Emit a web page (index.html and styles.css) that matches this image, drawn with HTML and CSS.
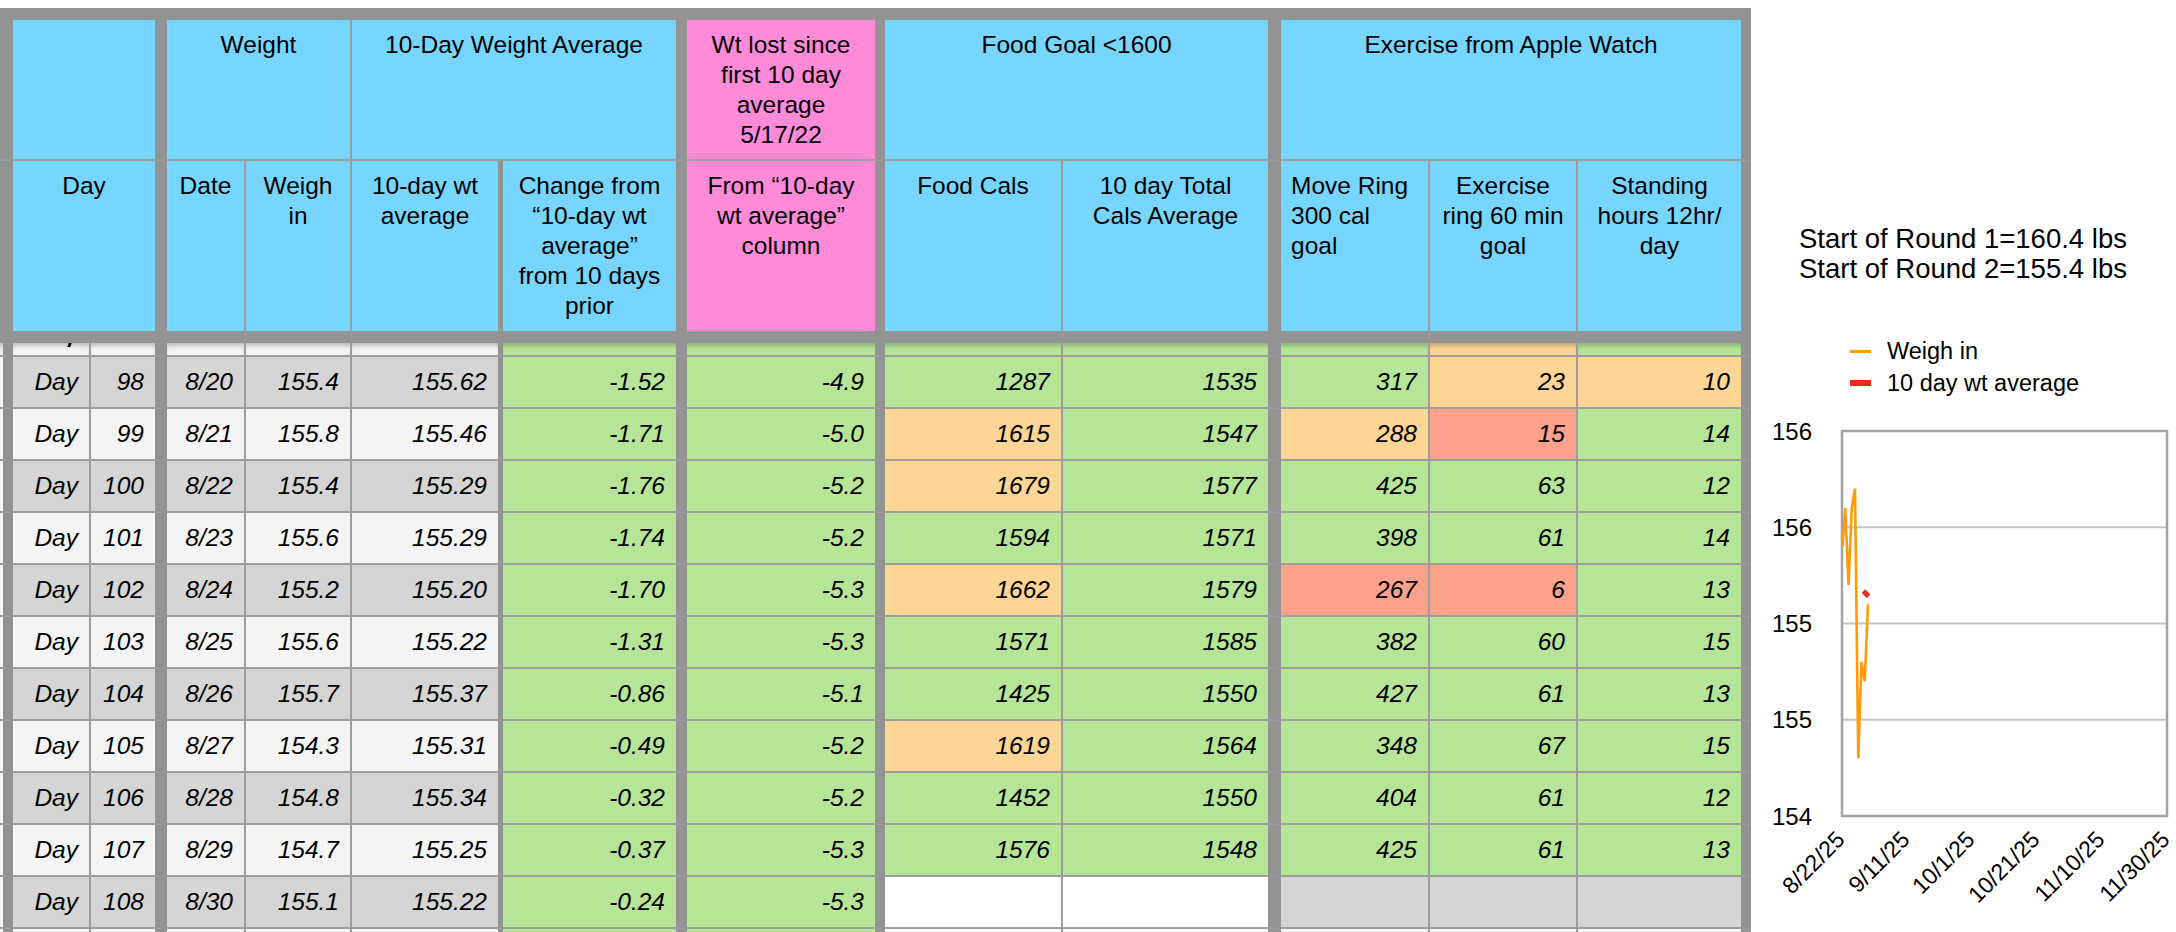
FILE: index.html
```html
<!DOCTYPE html>
<html lang="en">
<head>
<meta charset="utf-8">
<title>Weight tracker</title>
<link rel="stylesheet" href="styles.css">
</head>
<body>
<div class="page">
  <div class="sheet">
    <div class="hrow h1">
      <div class="c sl"></div>
      <div class="c hd sp2 tk12"></div>
      <div class="c hd sp2 tn">Weight</div>
      <div class="c hd sp2 tk11">10-Day Weight Average</div>
      <div class="c hd pink tk10">Wt lost since<br>first 10 day<br>average<br>5/17/22</div>
      <div class="c hd sp2 tk13">Food Goal &lt;1600</div>
      <div class="c hd sp3 tk10">Exercise from Apple Watch</div>
    </div>
    <div class="hrow h2">
      <div class="c sl"></div>
      <div class="c hd sp2 tk12">Day</div>
      <div class="c hd tn">Date</div>
      <div class="c hd tn">Weigh<br>in</div>
      <div class="c hd tk5">10-day wt<br>average</div>
      <div class="c hd tk11">Change from<br>“10-day wt<br>average”<br>from 10 days<br>prior</div>
      <div class="c hd pink tk10">From “10-day<br>wt average”<br>column</div>
      <div class="c hd tn">Food Cals</div>
      <div class="c hd tk13">10 day Total<br>Cals Average</div>
      <div class="c hd tn left">Move Ring<br>300 cal<br>goal</div>
      <div class="c hd tn">Exercise<br>ring 60 min<br>goal</div>
      <div class="c hd tk10">Standing<br>hours 12hr/<br>day</div>
    </div>

    <div class="row part">
      <div class="c l"></div><div class="c l"><i class="desc"></i></div><div class="c l"></div><div class="c l"></div><div class="c l"></div><div class="c l"></div><div class="c g"></div><div class="c g"></div><div class="c g"></div><div class="c g"></div><div class="c g"></div><div class="c o"></div><div class="c g"></div>
    </div>
    <div class="row">
      <div class="c l"></div><div class="c s">Day</div><div class="c s">98</div><div class="c s">8/20</div><div class="c s">155.4</div><div class="c s">155.62</div><div class="c g">-1.52</div><div class="c g">-4.9</div><div class="c g">1287</div><div class="c g">1535</div><div class="c g">317</div><div class="c o">23</div><div class="c o">10</div>
    </div>
    <div class="row">
      <div class="c l"></div><div class="c l">Day</div><div class="c l">99</div><div class="c l">8/21</div><div class="c l">155.8</div><div class="c l">155.46</div><div class="c g">-1.71</div><div class="c g">-5.0</div><div class="c o">1615</div><div class="c g">1547</div><div class="c o">288</div><div class="c r">15</div><div class="c g">14</div>
    </div>
    <div class="row">
      <div class="c l"></div><div class="c s">Day</div><div class="c s">100</div><div class="c s">8/22</div><div class="c s">155.4</div><div class="c s">155.29</div><div class="c g">-1.76</div><div class="c g">-5.2</div><div class="c o">1679</div><div class="c g">1577</div><div class="c g">425</div><div class="c g">63</div><div class="c g">12</div>
    </div>
    <div class="row">
      <div class="c l"></div><div class="c l">Day</div><div class="c l">101</div><div class="c l">8/23</div><div class="c l">155.6</div><div class="c l">155.29</div><div class="c g">-1.74</div><div class="c g">-5.2</div><div class="c g">1594</div><div class="c g">1571</div><div class="c g">398</div><div class="c g">61</div><div class="c g">14</div>
    </div>
    <div class="row">
      <div class="c l"></div><div class="c s">Day</div><div class="c s">102</div><div class="c s">8/24</div><div class="c s">155.2</div><div class="c s">155.20</div><div class="c g">-1.70</div><div class="c g">-5.3</div><div class="c o">1662</div><div class="c g">1579</div><div class="c r">267</div><div class="c r">6</div><div class="c g">13</div>
    </div>
    <div class="row">
      <div class="c l"></div><div class="c l">Day</div><div class="c l">103</div><div class="c l">8/25</div><div class="c l">155.6</div><div class="c l">155.22</div><div class="c g">-1.31</div><div class="c g">-5.3</div><div class="c g">1571</div><div class="c g">1585</div><div class="c g">382</div><div class="c g">60</div><div class="c g">15</div>
    </div>
    <div class="row">
      <div class="c l"></div><div class="c s">Day</div><div class="c s">104</div><div class="c s">8/26</div><div class="c s">155.7</div><div class="c s">155.37</div><div class="c g">-0.86</div><div class="c g">-5.1</div><div class="c g">1425</div><div class="c g">1550</div><div class="c g">427</div><div class="c g">61</div><div class="c g">13</div>
    </div>
    <div class="row">
      <div class="c l"></div><div class="c l">Day</div><div class="c l">105</div><div class="c l">8/27</div><div class="c l">154.3</div><div class="c l">155.31</div><div class="c g">-0.49</div><div class="c g">-5.2</div><div class="c o">1619</div><div class="c g">1564</div><div class="c g">348</div><div class="c g">67</div><div class="c g">15</div>
    </div>
    <div class="row">
      <div class="c l"></div><div class="c s">Day</div><div class="c s">106</div><div class="c s">8/28</div><div class="c s">154.8</div><div class="c s">155.34</div><div class="c g">-0.32</div><div class="c g">-5.2</div><div class="c g">1452</div><div class="c g">1550</div><div class="c g">404</div><div class="c g">61</div><div class="c g">12</div>
    </div>
    <div class="row">
      <div class="c l"></div><div class="c l">Day</div><div class="c l">107</div><div class="c l">8/29</div><div class="c l">154.7</div><div class="c l">155.25</div><div class="c g">-0.37</div><div class="c g">-5.3</div><div class="c g">1576</div><div class="c g">1548</div><div class="c g">425</div><div class="c g">61</div><div class="c g">13</div>
    </div>
    <div class="row">
      <div class="c l"></div><div class="c s">Day</div><div class="c s">108</div><div class="c s">8/30</div><div class="c s">155.1</div><div class="c s">155.22</div><div class="c g">-0.24</div><div class="c g">-5.3</div><div class="c w"></div><div class="c w"></div><div class="c s"></div><div class="c s"></div><div class="c s"></div>
    </div>
    <div class="row tail">
      <div class="c l"></div><div class="c l"></div><div class="c l"></div><div class="c l"></div><div class="c l"></div><div class="c l"></div><div class="c g"></div><div class="c g"></div><div class="c w"></div><div class="c w"></div><div class="c l"></div><div class="c l"></div><div class="c l"></div>
    </div>
  </div>

  <aside class="side">
    <div class="note">Start of Round 1=160.4 lbs<br>Start of Round 2=155.4 lbs</div>
    <ul class="legend">
      <li><span class="mk mk-wi"></span>Weigh in</li>
      <li><span class="mk mk-avg"></span>10 day wt average</li>
    </ul>
    <svg class="chart" width="425" height="533" viewBox="0 0 425 533">
      <g class="grid">
        <line x1="92" x2="416" y1="128.25" y2="128.25"/>
        <line x1="92" x2="416" y1="224.5" y2="224.5"/>
        <line x1="92" x2="416" y1="320.75" y2="320.75"/>
      </g>
      <rect class="frame" x="91" y="32" width="325" height="385"/>
      <g class="ylab">
        <text x="61" y="40.5">156</text>
        <text x="61" y="136.75">156</text>
        <text x="61" y="233">155</text>
        <text x="61" y="329.25">155</text>
        <text x="61" y="425.5">154</text>
      </g>
      <g class="xlab">
        <text transform="translate(95,442) rotate(-45)">8/22/25</text>
        <text transform="translate(160,442) rotate(-45)">9/11/25</text>
        <text transform="translate(225,442) rotate(-45)">10/1/25</text>
        <text transform="translate(290,442) rotate(-45)">10/21/25</text>
        <text transform="translate(355,442) rotate(-45)">11/10/25</text>
        <text transform="translate(420,442) rotate(-45)">11/30/25</text>
      </g>
      <polyline class="wi" points="91.5,147.5 94.25,109 97.5,186 100.75,109 104,89.75 107.25,359.25 110.5,263 113.75,282.25 117,205.25"/>
      <line class="avg" x1="112.5" y1="192" x2="117.5" y2="197.5"/>
    </svg>
  </aside>
</div>
</body>
</html>
```
FILE: styles.css
```css
html, body {
  margin: 0;
  padding: 0;
  background: #ffffff;
  overflow: hidden;
}
body {
  width: 2176px;
  height: 932px;
  font-family: "Liberation Sans", Arial, sans-serif;
  color: #000;
}
.page {
  display: flex;
  align-items: flex-start;
  height: 932px;
  overflow: hidden;
}

/* ---------- sheet ---------- */
.sheet {
  margin-top: 8px;
  width: 1751px;
  flex: none;
  display: grid;
  grid-template-columns: 13px 78px 76px 79px 106px 151px 184px 198px 178px 218px 149px 148px 173px;
  border-top: 12px solid #939393;
}
.hrow, .row { display: contents; }

.c {
  box-sizing: border-box;
  border-bottom: 2px solid #9d9d9d;
  border-right: 2px solid #9d9d9d;
  overflow: hidden;
}

/* header */
.hd {
  background: #76d6ff;
  font-size: 24.5px;
  line-height: 30px;
  text-align: center;
  padding: 10px 8px 0;
}
.hd.pink { background: #ff8ad8; }
.hd.left { text-align: left; padding-left: 10px; }
.sl { background: #939393; border-right: 10px solid #939393; }
.h1 > .c { height: 141px; }
.h2 > .c { height: 182px; border-bottom: 12px solid #939393; }
.sp2 { grid-column: span 2; }
.sp3 { grid-column: span 3; }
.tn { border-right: 2px solid #9d9d9d; }
.tk5 { border-right: 5px solid #939393; }
.tk10 { border-right: 10px solid #939393; }
.tk11 { border-right: 11px solid #939393; }
.tk12 { border-right: 12px solid #939393; }
.tk13 { border-right: 13px solid #939393; }

/* data rows */
.row > .c {
  height: 52px;
  font-size: 24.5px;
  font-style: italic;
  line-height: 50px;
  text-align: right;
  padding-right: 11px;
}
.row > .c:nth-child(1) { border-right: 10px solid #939393; padding: 0; }
.row > .c:nth-child(3) { border-right: 12px solid #939393; }
.row > .c:nth-child(6) { border-right: 5px solid #939393; }
.row > .c:nth-child(7) { border-right: 11px solid #939393; }
.row > .c:nth-child(8) { border-right: 10px solid #939393; }
.row > .c:nth-child(10) { border-right: 13px solid #939393; }
.row > .c:nth-child(13) { border-right: 10px solid #939393; }

.row.part > .c {
  height: 14px;
  box-shadow: inset 0 5px 4px -2px rgba(0, 0, 0, 0.22);
  position: relative;
}
/* tail of a "y" descender from the row scrolled under the header */
.desc {
  position: absolute;
  right: 18px;
  top: 0;
  width: 3px;
  height: 4px;
  background: #000;
  transform: skewX(-20deg);
}
.row.tail > .c { height: 5px; }

.l { background: #f4f4f4; }
.s { background: #d5d5d5; }
.g { background: #b7e598; }
.o { background: #fdd595; }
.r { background: #fca18b; }
.w { background: #ffffff; }

/* ---------- side panel ---------- */
.side {
  width: 425px;
  flex: none;
  padding-top: 224px;
}
.note {
  padding-left: 48px;
  font-size: 27.5px;
  line-height: 30px;
  white-space: nowrap;
}
.legend {
  list-style: none;
  margin: 51px 0 0;
  padding: 0 0 0 99px;
  font-size: 23.5px;
  line-height: 32px;
}
.legend li {
  display: flex;
  align-items: center;
  gap: 16px;
}
.mk {
  display: block;
  width: 21px;
}
.mk-wi { height: 3px; background: #ff9a0a; }
.mk-avg { height: 6px; background: #ee2a1b; }

.chart { display: block; }
.chart .grid line { stroke: #c4c4c4; stroke-width: 2; }
.chart .frame { fill: none; stroke: #a3a3a3; stroke-width: 2.5; }
.chart text {
  font-family: "Liberation Sans", Arial, sans-serif;
  font-size: 24px;
  fill: #000;
}
.chart .ylab text { text-anchor: end; }
.chart .xlab text { text-anchor: end; font-size: 23px; }
.chart .wi { fill: none; stroke: #ff9a0a; stroke-width: 2.6; stroke-linejoin: miter; }
.chart .avg { stroke: #ee2a1b; stroke-width: 5; }
```
